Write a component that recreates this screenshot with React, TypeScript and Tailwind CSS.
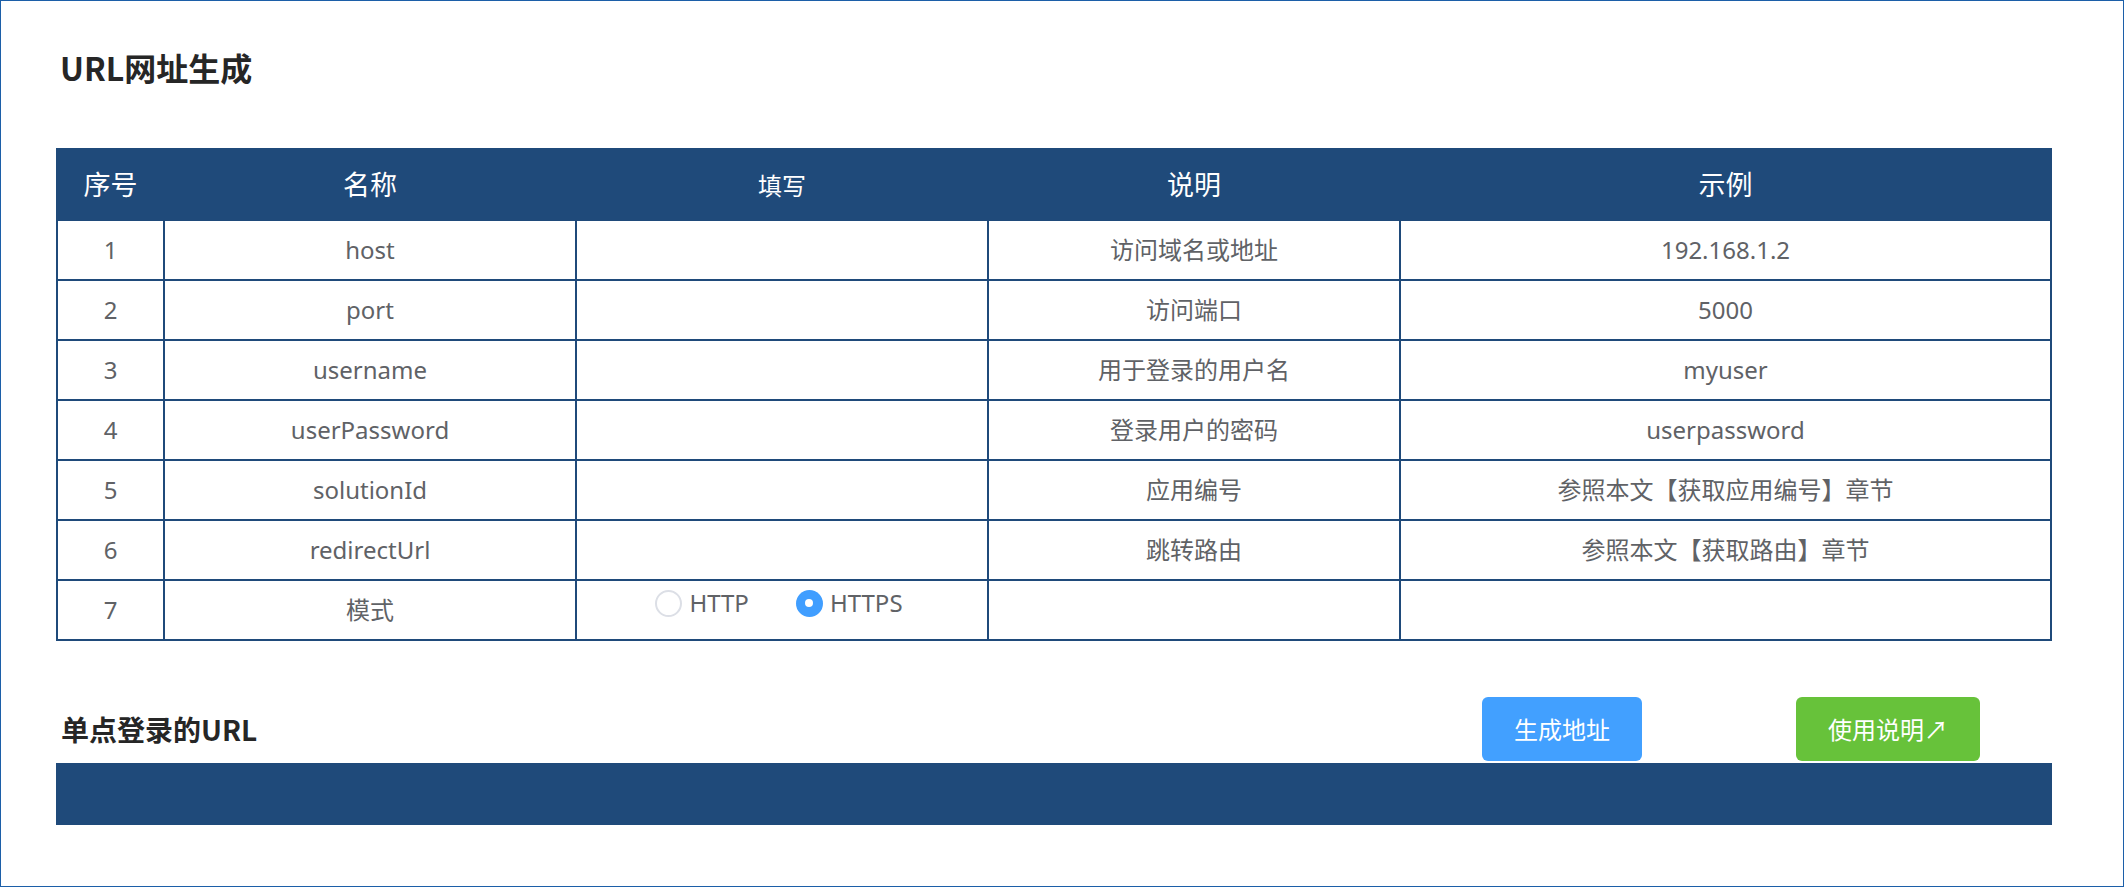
import React from "react";

const rows: [string, string, string, string][] = [
  ["1", "host", "访问域名或地址", "192.168.1.2"],
  ["2", "port", "访问端口", "5000"],
  ["3", "username", "用于登录的用户名", "myuser"],
  ["4", "userPassword", "登录用户的密码", "userpassword"],
  ["5", "solutionId", "应用编号", "参照本文【获取应用编号】章节"],
  ["6", "redirectUrl", "跳转路由", "参照本文【获取路由】章节"],
];

const td = "border-2 border-[#1f4a7a] h-[60px] p-0 text-center align-middle";
const th = "border-2 border-[#1f4a7a] h-[71px] p-0 font-normal";

export default function App() {
  return (
    <div
      className="w-[2124px] h-[887px] border border-[#1c5fa8] bg-white pl-[55px] pr-[71px] text-[#606266]"
      style={{ fontFamily: '"Noto Sans", "Noto Sans CJK SC", sans-serif' }}
    >
      <h1
        className="pt-[42px] pl-[4px] text-[32px] leading-[48px] font-bold text-[#262626]"
        style={{ fontFamily: '"Noto Sans CJK SC", sans-serif' }}
      >
        URL网址生成
      </h1>

      <table className="mt-[57px] w-[1996px] table-fixed border-collapse text-[24px]">
        <colgroup>
          <col className="w-[107px]" />
          <col className="w-[412px]" />
          <col className="w-[412px]" />
          <col className="w-[412px]" />
          <col />
        </colgroup>
        <thead>
          <tr
            className="bg-[#1f4a7a] text-white"
            style={{ fontFamily: '"Noto Sans CJK SC", sans-serif' }}
          >
            <th className={`${th} text-[27px]`}>序号</th>
            <th className={`${th} text-[27px]`}>名称</th>
            <th className={`${th} text-[24px]`}>填写</th>
            <th className={`${th} text-[27px]`}>说明</th>
            <th className={`${th} text-[27px]`}>示例</th>
          </tr>
        </thead>
        <tbody>
          {rows.map((r) => (
            <tr key={r[0]}>
              <td className={td}>{r[0]}</td>
              <td className={td}>{r[1]}</td>
              <td className={td}></td>
              <td className={td}>{r[2]}</td>
              <td className={td}>{r[3]}</td>
            </tr>
          ))}
          <tr>
            <td className={td}>7</td>
            <td className={td}>模式</td>
            <td className={td}>
              <div className="flex items-center justify-center pb-[14px] pr-[6px]">
                <label className="flex items-center gap-[7px]">
                  <span className="box-border w-[27px] h-[27px] rounded-full border-2 border-[#dcdfe6] bg-white" />
                  <span>HTTP</span>
                </label>
                <label className="ml-[47px] flex items-center gap-[7px]">
                  <span className="w-[27px] h-[27px] rounded-full bg-[#409eff] flex items-center justify-center">
                    <span className="w-[8px] h-[8px] rounded-full bg-white" />
                  </span>
                  <span>HTTPS</span>
                </label>
              </div>
            </td>
            <td className={td}></td>
            <td className={td}></td>
          </tr>
        </tbody>
      </table>

      <div className="mt-[56px] flex h-[64px] items-center">
        <h2
          className="flex-1 pl-[5px] text-[28px] font-bold text-[#262626]"
          style={{ fontFamily: '"Noto Sans CJK SC", sans-serif' }}
        >
          单点登录的URL
        </h2>
        <button
          className="h-[64px] w-[160px] rounded-[6px] bg-[#42a0ff] text-[24px] text-white"
          style={{ fontFamily: '"Noto Sans CJK SC", sans-serif' }}
        >
          生成地址
        </button>
        <button
          className="ml-[154px] mr-[72px] h-[64px] w-[184px] rounded-[6px] bg-[#67c23a] text-[24px] text-white"
          style={{ fontFamily: '"Noto Sans CJK SC", sans-serif' }}
        >
          使用说明↗
        </button>
      </div>
      <div className="mt-[2px] h-[62px] bg-[#1f4a7a]" />
    </div>
  );
}
